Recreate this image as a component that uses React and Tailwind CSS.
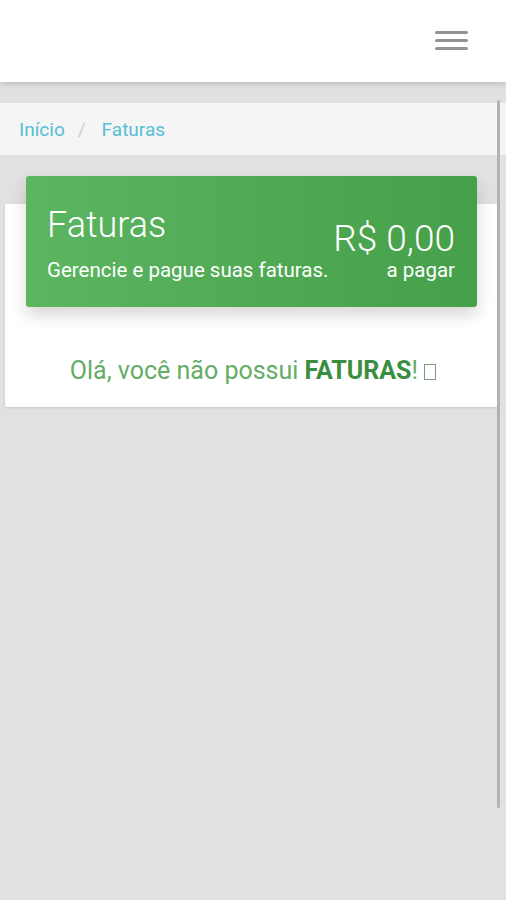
export default function App() {
  return (
    <div
      className="relative min-h-[900px] w-full bg-[#e1e1e1] overflow-hidden"
      style={{ fontFamily: "Roboto, 'Noto Sans', sans-serif" }}
    >
      <header className="relative z-10 h-[82px] bg-white shadow-[0_2px_6px_rgba(0,0,0,0.16)] flex items-center justify-end pr-[38px]">
        <div className="flex flex-col gap-[5px] mb-[2px]">
          <span className="block w-[33px] h-[3px] bg-[#939393] rounded-sm" />
          <span className="block w-[33px] h-[3px] bg-[#939393] rounded-sm" />
          <span className="block w-[33px] h-[3px] bg-[#939393] rounded-sm" />
        </div>
      </header>

      <nav className="mt-[21px] h-[52px] bg-[#f5f5f5] flex items-center pl-[19px] text-[19px] leading-none">
        <span className="text-[#56bfd6]">Início</span>
        <span className="text-[#cfcfcf] pl-[13px] pr-[16px]">/</span>
        <span className="text-[#56bfd6]">Faturas</span>
      </nav>

      <div className="pt-[49px] pl-[5px] pr-[8px]">
        <div className="flex flex-col bg-white rounded-[2px] shadow-[0_1px_3px_rgba(0,0,0,0.12)] px-[21px] pb-[21px]">
          <div className="-mt-[28px] h-[131px] rounded-[3px] bg-gradient-to-r from-[#5cb560] to-[#45a049] shadow-[0_8px_16px_rgba(0,0,0,0.16)] text-white flex justify-between items-end pl-[21px] pr-[22px] pb-[24px]">
            <div className="flex flex-col">
              <span className="text-[36px] font-light leading-[40px]">Faturas</span>
              <span className="mt-[12px] text-[20.5px] leading-[26px]">Gerencie e pague suas faturas.</span>
            </div>
            <div className="flex flex-col items-end">
              <span className="text-[37px] font-light leading-[36px]">R$ 0,00</span>
              <span className="text-[20.5px] leading-[26px]">a pagar</span>
            </div>
          </div>
          <p className="mt-[49px] text-center text-[25px] leading-[30px] text-[#63ad66] pl-[3px]">
            Olá, você não possui <b className="font-bold text-[#3b8d3f]">FATURAS</b>!{" "}
            <span className="inline-block align-[-1px] w-[12px] h-[16px] border border-[#7a9a7c]" />
          </p>
        </div>
      </div>

      <div className="absolute left-[497px] top-[100px] h-[708px] w-[3px] bg-[#b3b3b3] rounded-full" />
    </div>
  );
}
